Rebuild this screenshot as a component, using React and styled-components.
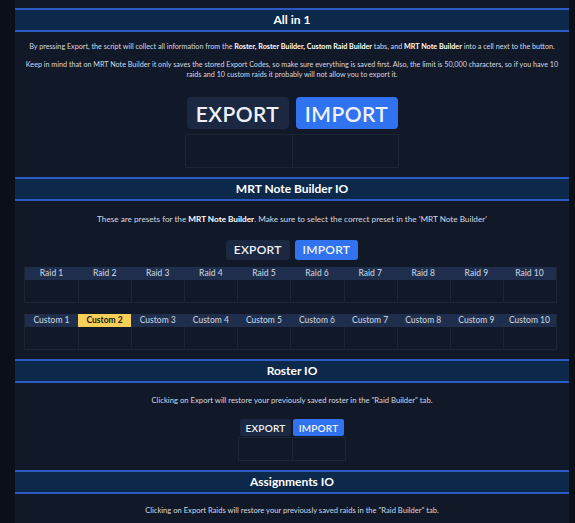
import React from 'react';
import styled, { createGlobalStyle } from 'styled-components';

const GlobalStyle = createGlobalStyle`
    body {
        margin: 0;
        background: #0b0f17;
        font-family: 'Lato', 'Noto Sans', sans-serif;
    }
`;

const raids = Array.from({ length: 10 }, (_, i) => `Raid ${i + 1}`);
const customs = Array.from({ length: 10 }, (_, i) => `Custom ${i + 1}`);

const App = () => (
    <>
        <GlobalStyle />
        <Page>
            <Main>
                <Section>
                    <Header>All in 1</Header>
                    <Body>
                        <Note $top={10} $size={7.2}>
                            By pressing Export, the script will collect all information from the <b>Roster, Roster Builder, Custom Raid Builder</b> tabs, and <b>MRT Note Builder</b> into a cell next to the button.
                        </Note>
                        <Note $top={8} $size={7.2}>
                            Keep in mind that on MRT Note Builder it only saves the stored Export Codes, so make sure everything is saved first. Also, the limit is 50,000 characters, so if you have 10
                            <br />
                            raids and 10 custom raids it probably will not allow you to export it.
                        </Note>
                        <Buttons $size="lg">
                            <Button $size="lg">EXPORT</Button>
                            <Button $size="lg" $primary>IMPORT</Button>
                        </Buttons>
                        <OutputRow $cell={106} $height={32} $top={5}>
                            <Cell />
                            <Cell />
                        </OutputRow>
                    </Body>
                </Section>

                <Section>
                    <Header>MRT Note Builder IO</Header>
                    <Body>
                        <Note $top={13} $size={8.2}>
                            These are presets for the <b>MRT Note Builder</b>. Make sure to select the correct preset in the 'MRT Note Builder'
                        </Note>
                        <Buttons $size="md">
                            <Button $size="md">EXPORT</Button>
                            <Button $size="md" $primary>IMPORT</Button>
                        </Buttons>
                        <PresetTable>
                            {raids.map((r) => (
                                <PresetHead key={r}>{r}</PresetHead>
                            ))}
                            {raids.map((r) => (
                                <PresetCell key={r} />
                            ))}
                        </PresetTable>
                        <PresetTable>
                            {customs.map((c, i) => (
                                <PresetHead key={c} $active={i === 1}>{c}</PresetHead>
                            ))}
                            {customs.map((c) => (
                                <PresetCell key={c} />
                            ))}
                        </PresetTable>
                    </Body>
                </Section>

                <Section>
                    <Header>Roster IO</Header>
                    <Body>
                        <Note $top={12} $size={7.7}>
                            Clicking on Export will restore your previously saved roster in the "Raid Builder" tab.
                        </Note>
                        <Buttons $size="sm">
                            <Button $size="sm">EXPORT</Button>
                            <Button $size="sm" $primary>IMPORT</Button>
                        </Buttons>
                        <OutputRow $cell={53} $height={22} $top={1}>
                            <Cell />
                            <Cell />
                        </OutputRow>
                    </Body>
                </Section>

                <Section>
                    <Header>Assignments IO</Header>
                    <Body>
                        <Note $top={11} $size={7.6}>
                            Clicking on Export Raids will restore your previously saved raids in the "Raid Builder" tab.
                        </Note>
                    </Body>
                </Section>
            </Main>
        </Page>
    </>
);

const Page = styled.div`
    display: flex;
    height: 523px;
    overflow: hidden;
    padding-left: 15px;
    padding-right: 6px;
`;

const Main = styled.div`
    flex: 1;
    background: #111827;
    padding-top: 8px;
    display: flex;
    flex-direction: column;
`;

const Section = styled.section`
    display: flex;
    flex-direction: column;
    padding-bottom: 9px;
`;

// blue bar with the section title
const Header = styled.h2`
    margin: 0;
    height: 20px;
    line-height: 20px;
    border-top: 2px solid #2a5ac2;
    border-bottom: 2px solid #2a5ac2;
    background: #0c284b;
    color: #ffffff;
    font-size: 12px;
    font-weight: 700;
    text-align: center;
`;

const Body = styled.div`
    display: flex;
    flex-direction: column;
    align-items: center;
`;

const Note = styled.p`
    margin: ${(p) => p.$top}px 0 0;
    padding: 0 8px;
    font-size: ${(p) => p.$size}px;
    line-height: 10px;
    color: #d4d9e2;
    text-align: center;
    white-space: nowrap;
    b {
        color: #ffffff;
        font-weight: 700;
    }
`;

const sizes = {
    lg: { top: 17, h: 32, w: '102px', pad: 0, gap: 7, font: 21, radius: 4 },
    md: { top: 16, h: 20, w: 'auto', pad: 8, gap: 5, font: 12, radius: 3 },
    sm: { top: 14, h: 17, w: '51px', pad: 0, gap: 2, font: 10, radius: 2 },
};

const Buttons = styled.div`
    display: flex;
    gap: ${(p) => sizes[p.$size].gap}px;
    margin-top: ${(p) => sizes[p.$size].top}px;
`;

const Button = styled.button`
    width: ${(p) => sizes[p.$size].w};
    height: ${(p) => sizes[p.$size].h}px;
    padding: 0 ${(p) => sizes[p.$size].pad}px;
    border: none;
    border-radius: ${(p) => sizes[p.$size].radius}px;
    background: ${(p) => (p.$primary ? '#3072f0' : '#1c2841')};
    color: #eef2f8;
    font-family: inherit;
    font-size: ${(p) => sizes[p.$size].font}px;
    font-weight: 600;
    letter-spacing: 0.02em;
    line-height: 1;
`;

// empty output cells under the buttons
const OutputRow = styled.div`
    display: grid;
    grid-template-columns: repeat(2, ${(p) => p.$cell}px);
    height: ${(p) => p.$height}px;
    margin-top: ${(p) => p.$top}px;
    border: 1px solid #1b2536;
`;

const Cell = styled.div`
    & + & {
        border-left: 1px solid #1b2536;
    }
`;

const PresetTable = styled.div`
    align-self: stretch;
    margin: 7px 12px 0 9px;
    display: grid;
    grid-template-columns: repeat(10, 1fr);
    grid-template-rows: 13px 22px;
    border: 1px solid #1b2536;
    border-top: none;
    & + & {
        margin-top: 11px;
    }
`;

const PresetHead = styled.div`
    background: ${(p) => (p.$active ? '#f8cf57' : '#1e2e4c')};
    color: ${(p) => (p.$active ? '#141414' : '#c3cede')};
    font-size: 8.5px;
    font-weight: ${(p) => (p.$active ? 700 : 500)};
    line-height: 13px;
    text-align: center;
    white-space: nowrap;
`;

const PresetCell = styled.div`
    border-left: 1px solid #1b2536;
    &:nth-child(11) {
        border-left: none;
    }
`;

export default App;
